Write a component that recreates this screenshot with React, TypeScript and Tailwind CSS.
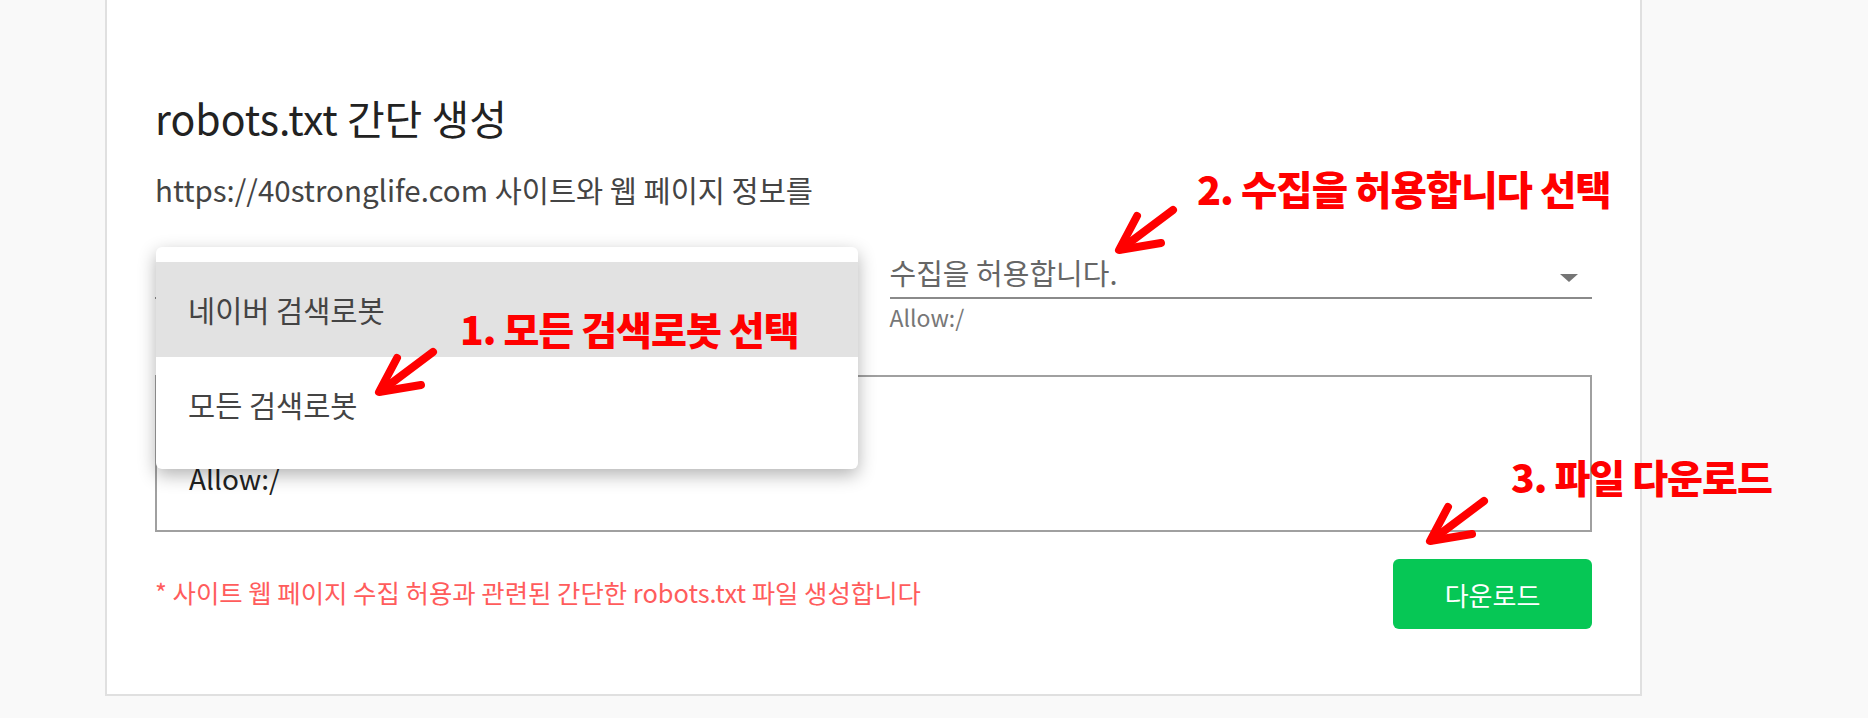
import React from "react";

const font = { fontFamily: '"Noto Sans CJK KR", "Noto Sans", sans-serif' };

function Arrow({ x, y }: { x: number; y: number }) {
  // red hand-drawn style arrow, tip at (x, y), pointing down-left
  return (
    <g stroke="#ff0000" strokeWidth={8} strokeLinecap="round" strokeLinejoin="round" fill="none">
      <path d={`M${x + 54} ${y - 40} L${x + 2} ${y - 1}`} />
      <path d={`M${x + 18} ${y - 34} L${x} ${y} L${x + 42} ${y - 7}`} />
    </g>
  );
}

export default function App() {
  return (
    <div className="relative w-full min-h-[718px] bg-[#f9f9f9]" style={font}>
      <div className="ml-[105px] w-[1537px] border-x-2 border-b-2 border-[#e0e0e0] bg-white px-12 pt-[93px] pb-[65px]">
        <h2 className="text-[41px] leading-[48px] text-[#222]">robots.txt 간단 생성</h2>
        <p className="mt-[28px] text-[29.5px] leading-[40px] text-[#444]">
          https://40stronglife.com 사이트와 웹 페이지 정보를
        </p>

        <div className="mt-[41px] grid grid-cols-2 gap-8">
          {/* left select, its list is open */}
          <div className="relative">
            <div className="h-[49px] border-b-2 border-[#8a8a8a]" />
            <div className="h-[33px]" />

            <div className="absolute left-[1px] top-[-3px] z-10 w-[702px] rounded-md bg-white pt-[15px] pb-[17px] shadow-[0_6px_18px_rgba(0,0,0,0.3)]">
              <div className="flex h-[95px] items-center bg-[#e2e2e2] pl-8 text-[29.5px] text-[#444]">
                네이버 검색로봇
              </div>
              <div className="flex h-[95px] items-center pl-8 text-[29.5px] text-[#444]">모든 검색로봇</div>
            </div>
          </div>

          {/* right select */}
          <div>
            <div className="flex h-[49px] items-start justify-between border-b-2 border-[#8a8a8a] pt-[3px]">
              <span className="text-[29px] leading-[38px] text-[#666]">수집을 허용합니다.</span>
              <span className="mt-[21px] mr-[14px] h-0 w-0 border-x-[9px] border-t-[8px] border-x-transparent border-t-[#757575]" />
            </div>
            <div className="mt-[3px] text-[23px] leading-[30px] text-[#777]">Allow:/</div>
          </div>
        </div>

        <textarea
          readOnly
          value={"User-agent: *\nAllow:/"}
          className="mt-[43px] block h-[157px] w-full resize-none border-2 border-[#a0a0a0] px-8 pt-[38px] text-[28px] leading-[42px] text-[#222] outline-none"
        />

        <div className="mt-[27px] flex items-center justify-between">
          <p className="pb-[4px] text-[25.4px] text-[#ff5c5c]">
            * 사이트 웹 페이지 수집 허용과 관련된 간단한 robots.txt 파일 생성합니다
          </p>
          <button className="h-[70px] w-[199px] rounded-md bg-[#06c755] text-[26px] text-white">다운로드</button>
        </div>
      </div>

      {/* annotations */}
      <svg className="pointer-events-none absolute left-0 top-0 z-20" width={1868} height={718}>
        <Arrow x={379} y={392} />
        <Arrow x={1119} y={250} />
        <Arrow x={1430} y={541} />
      </svg>
      <div className="pointer-events-none absolute left-[460px] top-[304px] z-20 text-[39px] font-black leading-[48px] tracking-tight text-[#ff0000]">
        1. 모든 검색로봇 선택
      </div>
      <div className="pointer-events-none absolute left-[1197px] top-[164px] z-20 text-[39.5px] font-black leading-[48px] tracking-tight text-[#ff0000]">
        2. 수집을 허용합니다 선택
      </div>
      <div className="pointer-events-none absolute left-[1511px] top-[452px] z-20 text-[39px] font-black leading-[48px] tracking-tight text-[#ff0000]">
        3. 파일 다운로드
      </div>
    </div>
  );
}
